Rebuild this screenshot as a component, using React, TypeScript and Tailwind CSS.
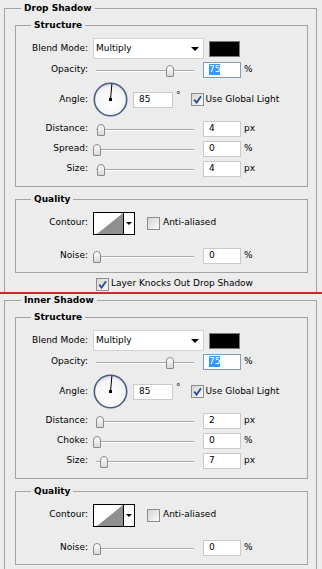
import React from "react";

type SliderRow = {
  label: string;
  value: string;
  unit: string;
  thumb: string;
  focused?: boolean;
};

const opacityRow: SliderRow = { label: "Opacity:", value: "75", unit: "%", thumb: "left-[73px]", focused: true };
const noiseRow: SliderRow = { label: "Noise:", value: "0", unit: "%", thumb: "left-[0px]" };

const dropShadowRows: SliderRow[] = [
  { label: "Distance:", value: "4", unit: "px", thumb: "left-[4px]" },
  { label: "Spread:", value: "0", unit: "%", thumb: "left-[0px]" },
  { label: "Size:", value: "4", unit: "px", thumb: "left-[4px]" },
];

const innerShadowRows: SliderRow[] = [
  { label: "Distance:", value: "2", unit: "px", thumb: "left-[3px]" },
  { label: "Choke:", value: "0", unit: "%", thumb: "left-[0px]" },
  { label: "Size:", value: "7", unit: "px", thumb: "left-[7px]" },
];

function Label({ children }: { children: React.ReactNode }) {
  return <span className="w-[72px] shrink-0 text-right">{children}</span>;
}

function Checkbox({ checked }: { checked?: boolean }) {
  return (
    <span className="flex h-[13px] w-[13px] shrink-0 items-center justify-center border border-[#8d8d8d] bg-gradient-to-br from-[#d4d4d4] to-[#fafafa]">
      {checked && (
        <svg width="9" height="9" viewBox="0 0 9 9">
          <path d="M1.2 4.6 L3.6 7.6 L8 1.2" fill="none" stroke="#2f4c8f" strokeWidth="1.8" />
        </svg>
      )}
    </span>
  );
}

function Slider({ thumb }: { thumb: string }) {
  return (
    <div className="relative mt-[2px] flex h-[12px] w-[104px] shrink-0 items-center">
      <div className="ml-[3px] h-[2px] w-[98px] border-t border-[#a9a9a9] bg-white" />
      <div
        className={`absolute top-0 h-[12px] w-[8px] rounded-t-[4px] rounded-b-[1px] border border-[#8a8a8a] bg-gradient-to-b from-white to-[#d8d8d8] ${thumb}`}
      />
    </div>
  );
}

function Field({ value, focused, width }: { value: string; focused?: boolean; width: string }) {
  return (
    <span
      className={`flex h-[16px] shrink-0 items-center border bg-white pl-[5px] ${width} ${
        focused ? "border-[#7f9db9]" : "border-[#cacaca]"
      }`}
    >
      {focused ? <span className="bg-[#3399ff] leading-[11px] text-white">{value}</span> : value}
    </span>
  );
}

function SliderLine({ row, height }: { row: SliderRow; height: string }) {
  return (
    <div className={`flex items-center ${height}`}>
      <Label>{row.label}</Label>
      <div className="ml-[5px]">
        <Slider thumb={row.thumb} />
      </div>
      <div className="ml-[6px]">
        <Field value={row.value} focused={row.focused} width="w-[38px]" />
      </div>
      <span className="ml-[3px]">{row.unit}</span>
    </div>
  );
}

function AngleDial({ id }: { id: string }) {
  return (
    <svg width="35" height="35" viewBox="0 0 35 35" className="shrink-0">
      <defs>
        <radialGradient id={id} cx="50%" cy="62%" r="60%">
          <stop offset="0%" stopColor="#ffffff" />
          <stop offset="80%" stopColor="#f4f4f4" />
          <stop offset="100%" stopColor="#d9dbe0" />
        </radialGradient>
      </defs>
      <circle cx="17.5" cy="17.5" r="16.2" fill={`url(#${id})`} stroke="#4d5f80" strokeWidth="1.6" />
      <line x1="17.5" y1="17.5" x2="18.9" y2="1.8" stroke="#000" strokeWidth="1" />
      <rect x="16" y="16" width="3" height="3" fill="#000" />
    </svg>
  );
}

function Contour() {
  return (
    <div className="flex h-[23px] w-[42px] shrink-0 border border-black bg-white">
      <svg width="29" height="21" viewBox="0 0 29 21">
        <polygon points="3,21 29,0 29,21" fill="#8f8f8f" />
      </svg>
      <div className="flex flex-1 items-center justify-center border-l border-black">
        <span className="h-0 w-0 border-x-[3px] border-t-[3px] border-x-transparent border-t-black" />
      </div>
    </div>
  );
}

function Section({
  title,
  rows,
  dialId,
  knockout,
}: {
  title: string;
  rows: SliderRow[];
  dialId: string;
  knockout?: boolean;
}) {
  return (
    <fieldset className="ml-[4px] w-[313px] border border-[#a3a3a3]">
      <legend className="ml-[16px] px-[3px] font-bold leading-[12px]">{title}</legend>
      <div className="pb-[6px] pl-[10px] pr-[8px] pt-[5px]">
        {/* Structure */}
        <fieldset className="border border-[#a3a3a3]">
          <legend className="ml-[15px] px-[3px] font-bold leading-[12px]">Structure</legend>
          <div className="pb-[7px] pt-[7px]">
            <div className="flex h-[21px] items-center">
              <Label>Blend Mode:</Label>
              <div className="ml-[5px] flex h-[21px] w-[111px] items-center justify-between border border-[#d2d2d2] bg-white pl-[2px] pr-[4px]">
                <span>Multiply</span>
                <span className="h-0 w-0 border-x-[4px] border-t-[4px] border-x-transparent border-t-black" />
              </div>
              <span className="ml-[5px] h-[16px] w-[31px] border border-[#7a7a7a] bg-black" />
            </div>
            <SliderLine row={opacityRow} height="h-[21px]" />
            <div className="flex h-[39px] items-center">
              <Label>Angle:</Label>
              <div className="ml-[5px] flex">
                <AngleDial id={dialId} />
              </div>
              <div className="ml-[5px]">
                <Field value="85" width="w-[40px]" />
              </div>
              <span className="ml-[3px] self-start pt-[9px]">°</span>
              <div className="ml-[10px]">
                <Checkbox checked />
              </div>
              <span className="ml-[2px]">Use Global Light</span>
            </div>
            {rows.map((row) => (
              <SliderLine key={row.label} row={row} height="h-[20px]" />
            ))}
          </div>
        </fieldset>

        {/* Quality */}
        <fieldset className="mt-[6px] border border-[#a3a3a3]">
          <legend className="ml-[15px] px-[3px] font-bold leading-[12px]">Quality</legend>
          <div className="pb-[6px] pt-[7px]">
            <div className="flex h-[22px] items-center">
              <Label>Contour:</Label>
              <div className="ml-[5px]">
                <Contour />
              </div>
              <div className="ml-[12px]">
                <Checkbox />
              </div>
              <span className="ml-[3px]">Anti-aliased</span>
            </div>
            <div className="mt-[11px]">
              <SliderLine row={noiseRow} height="h-[21px]" />
            </div>
          </div>
        </fieldset>

        {knockout && (
          <div className="mt-[3px] flex h-[16px] items-center pl-[81px]">
            <Checkbox checked />
            <span className="ml-[2px]">Layer Knocks Out Drop Shadow</span>
          </div>
        )}
      </div>
    </fieldset>
  );
}

export default function App() {
  return (
    <div className="h-[569px] w-[322px] overflow-hidden bg-[#ececec] font-['DejaVu_Sans',sans-serif] text-[9px] text-black">
      <div className="h-[292px] overflow-hidden pt-[2px]">
        <Section title="Drop Shadow" rows={dropShadowRows} dialId="dial-drop" knockout />
      </div>
      <div className="h-[2px] bg-[#d8232a]" />
      <Section title="Inner Shadow" rows={innerShadowRows} dialId="dial-inner" />
    </div>
  );
}
